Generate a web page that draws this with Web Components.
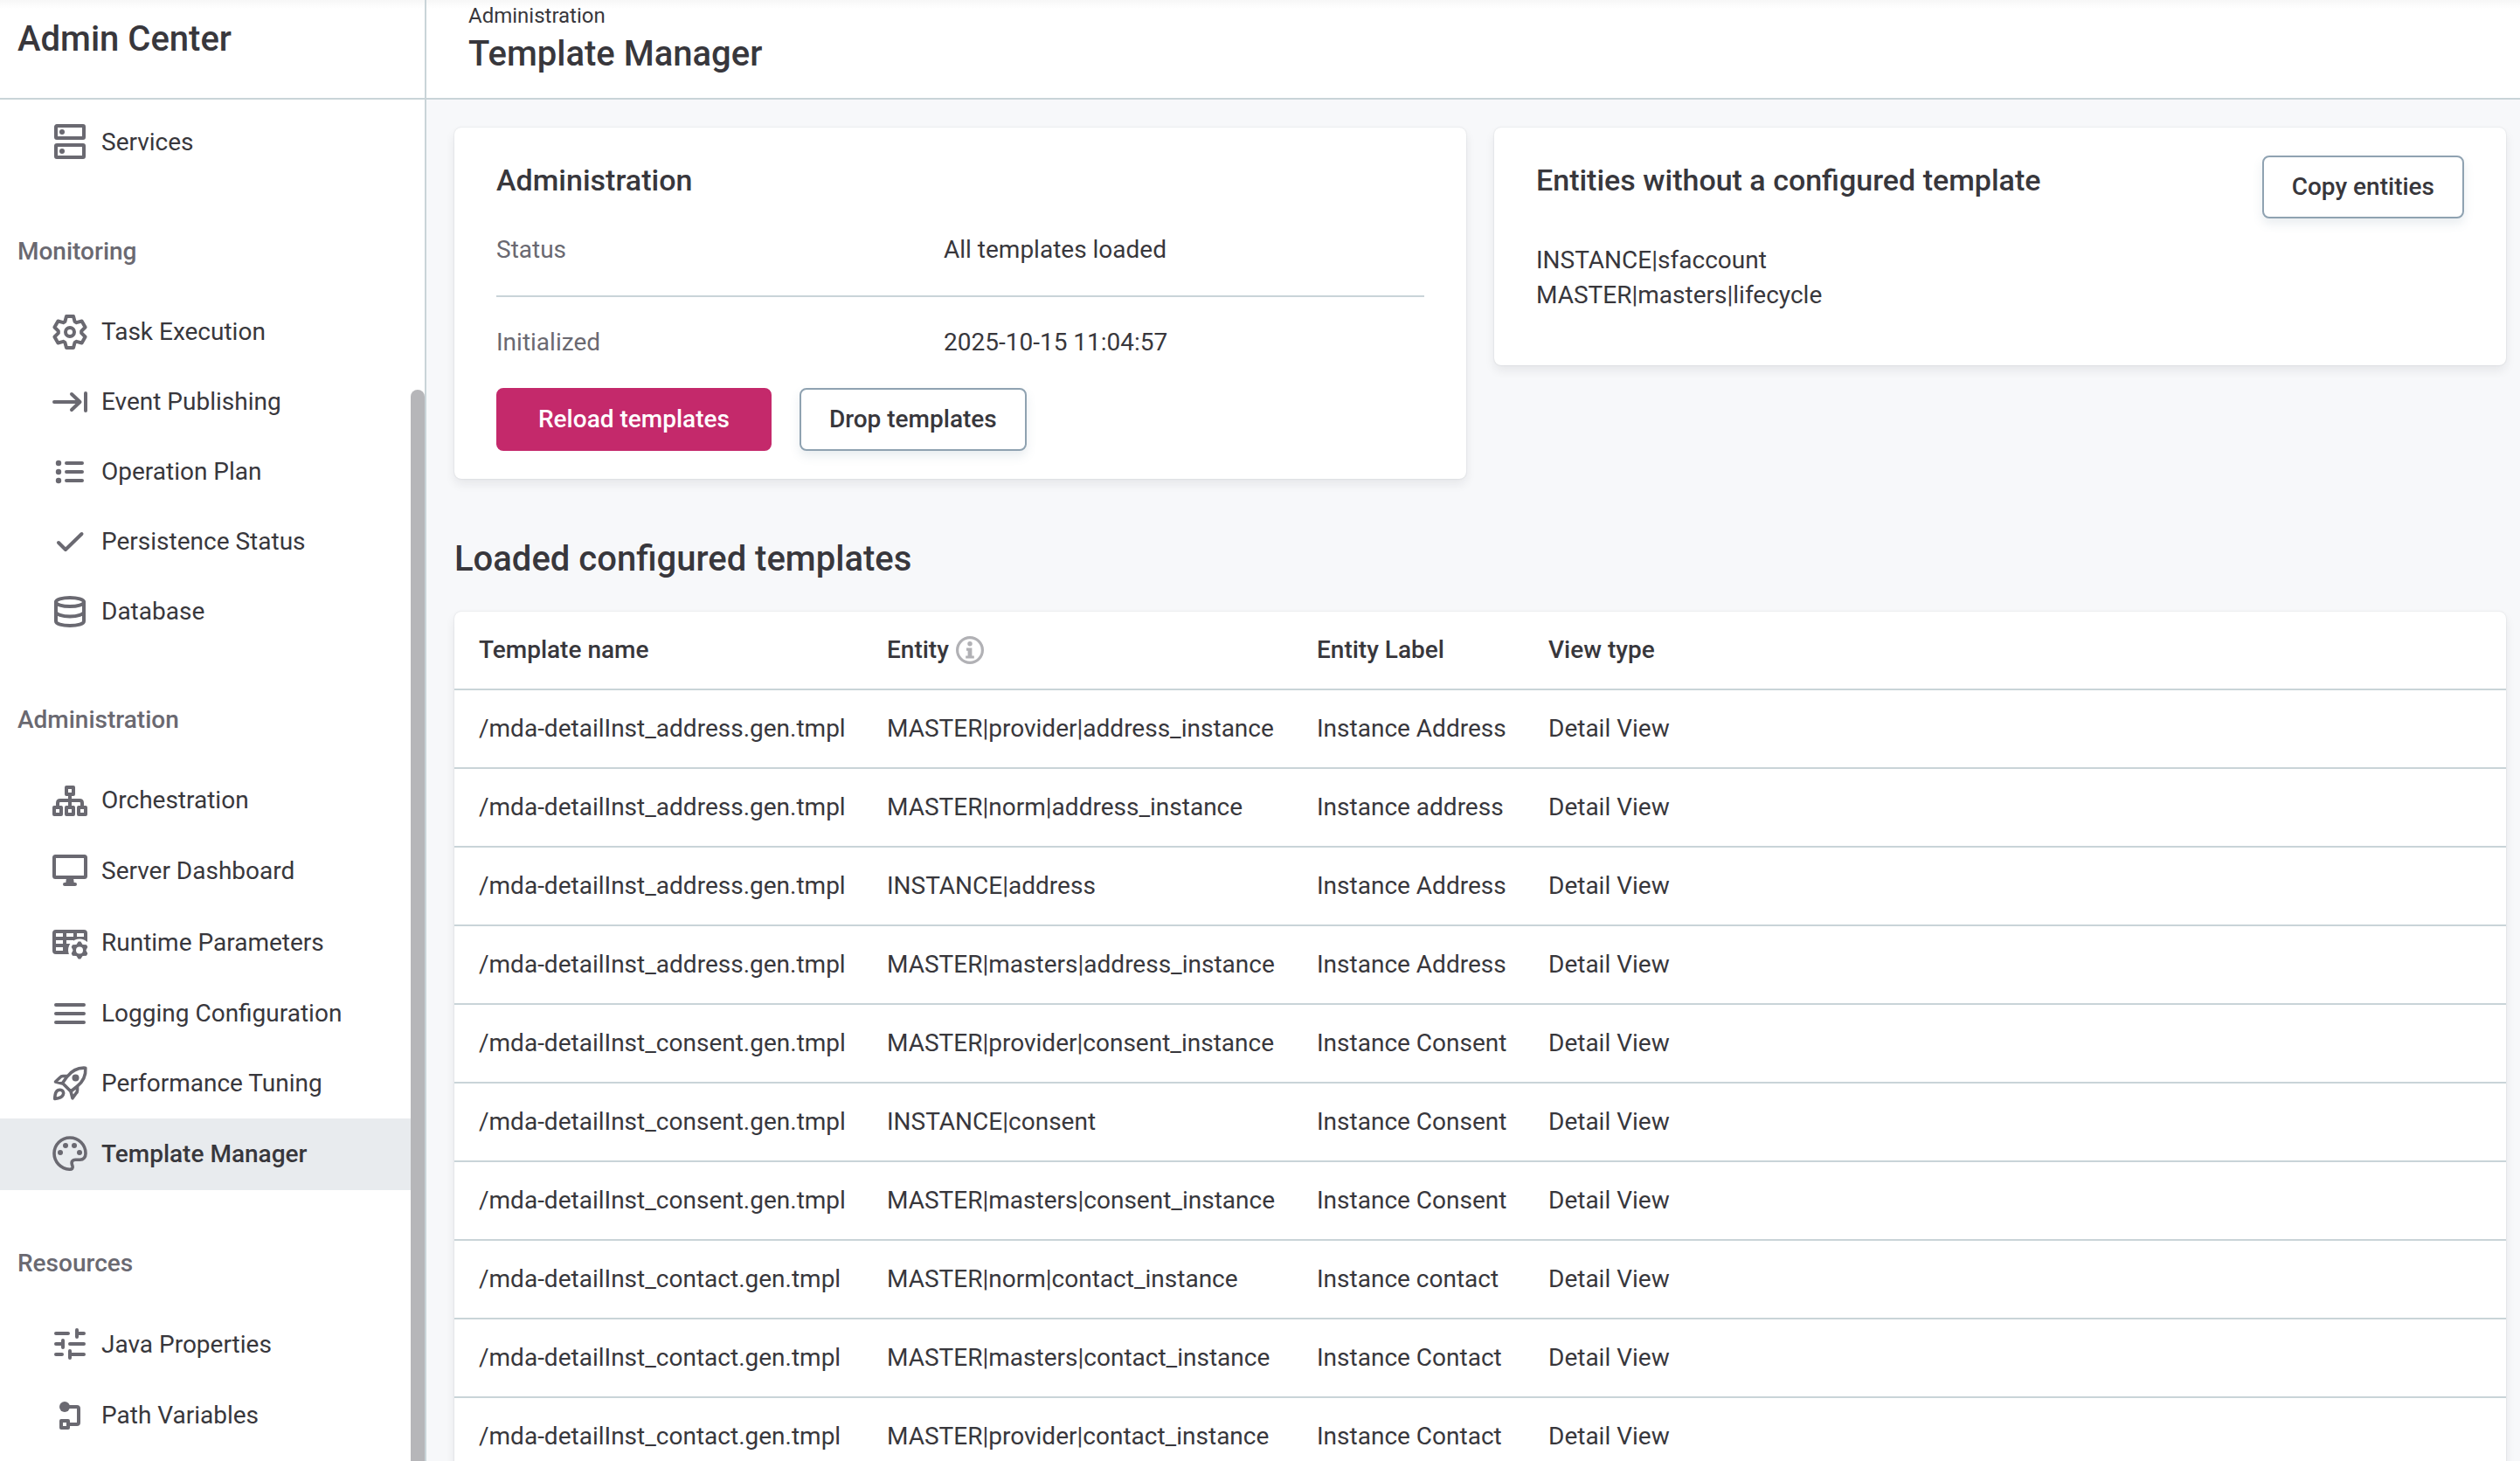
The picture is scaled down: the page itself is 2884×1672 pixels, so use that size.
<!DOCTYPE html>
<html lang="en">
<head>
<meta charset="utf-8">
<title>Template Manager</title>
<style>
  :root {
    --ink: #38373c;
    --muted: #6a6971;
    --line: #c9d4d8;
    --page: #f7f8fa;
    --selected: #e8ebee;
    --accent: #c4296b;
    --outline: #8fa2b1;
    --thumb: #b6b6b9;
  }
  html, body { height: 100%; }
  body {
    margin: 0;
    overflow: hidden;
    font: 400 28px/40px Roboto, "Liberation Sans", sans-serif;
    color: var(--ink);
    background: #fff;
  }
</style>
</head>
<body>
<admin-app></admin-app>

<template id="tpl-app">
  <style>
    :host { display: grid; grid-template-columns: 488px minmax(0, 1fr); height: 100vh; overflow: hidden; }
  </style>
  <admin-sidebar></admin-sidebar>
  <admin-page section="Administration" heading="Template Manager">
    <template-manager></template-manager>
  </admin-page>
</template>

<template id="tpl-sidebar">
  <style>
    :host { display: flex; flex-direction: column; min-height: 0; box-sizing: border-box; border-right: 2px solid var(--line); background: #fff; }
    header { box-sizing: border-box; height: 114px; flex: none; padding: 21px 20px 0; border-bottom: 2px solid var(--line); background: linear-gradient(#f7f7f7, #fff 10px); }
    h1 { margin: 0; font-size: 40px; line-height: 48px; font-weight: 500; }
    .scroll { flex: 1; min-height: 0; display: flex; overflow: hidden; }
    nav { flex: 1; min-width: 0; padding-top: 8px; }
    .bar { width: 16px; flex: none; display: flex; }
    .thumb { flex: 1; margin-top: 332px; border-radius: 8px 8px 0 0; background: var(--thumb); }
  </style>
  <header><h1>Admin Center</h1></header>
  <div class="scroll">
    <nav aria-label="Admin Center">
      <nav-item icon="services" tall>Services</nav-item>
      <nav-group label="Monitoring">
        <nav-item icon="gear">Task Execution</nav-item>
        <nav-item icon="event">Event Publishing</nav-item>
        <nav-item icon="list">Operation Plan</nav-item>
        <nav-item icon="check">Persistence Status</nav-item>
        <nav-item icon="database">Database</nav-item>
      </nav-group>
      <nav-group label="Administration">
        <nav-item icon="tree">Orchestration</nav-item>
        <nav-item icon="monitor" tall>Server Dashboard</nav-item>
        <nav-item icon="params" tall>Runtime Parameters</nav-item>
        <nav-item icon="lines">Logging Configuration</nav-item>
        <nav-item icon="rocket">Performance Tuning</nav-item>
        <nav-item icon="palette" tall selected>Template Manager</nav-item>
      </nav-group>
      <nav-group label="Resources">
        <nav-item icon="sliders" tall>Java Properties</nav-item>
        <nav-item icon="path">Path Variables</nav-item>
      </nav-group>
    </nav>
    <div class="bar"><div class="thumb"></div></div>
  </div>
</template>

<template id="tpl-group">
  <style>
    :host { display: block; }
    h2 { margin: 0; padding: 64px 20px 32px; font-size: 28px; line-height: 40px; font-weight: 500; color: var(--muted); }
  </style>
  <h2></h2>
  <slot></slot>
</template>

<template id="tpl-item">
  <style>
    :host { display: block; }
    a { display: flex; align-items: center; gap: 16px; height: 80px; padding-left: 60px; color: inherit; text-decoration: none; white-space: nowrap; }
    :host([tall]) a { height: 82px; }
    :host([selected]) a { background: var(--selected); font-weight: 500; }
    app-icon { color: var(--muted); }
  </style>
  <a href="#"><app-icon></app-icon><span><slot></slot></span></a>
</template>

<template id="tpl-page">
  <style>
    :host { display: flex; flex-direction: column; min-width: 0; min-height: 0; background: var(--page); }
    header { box-sizing: border-box; height: 114px; flex: none; padding: 2px 48px 0; border-bottom: 2px solid var(--line); background: linear-gradient(#f7f7f7, #fff 10px); }
    p { margin: 0; font-size: 24px; line-height: 32px; }
    h1 { margin: 0; font-size: 40px; line-height: 56px; font-weight: 500; }
    main { flex: 1; min-height: 0; padding: 32px 16px 0 32px; overflow: hidden; }
  </style>
  <header><p></p><h1></h1></header>
  <main><slot></slot></main>
</template>

<template id="tpl-card">
  <style>
    :host { display: block; padding: 32px 48px; border-radius: 8px; background: #fff; box-shadow: 0 0 2px rgba(20, 30, 40, .14), 0 6px 12px rgba(20, 30, 40, .08); }
    header { display: flex; justify-content: space-between; align-items: flex-start; }
    h2 { margin: 8px 0; font-size: 34px; line-height: 40px; font-weight: 500; }
  </style>
  <header><h2></h2><slot name="action"></slot></header>
  <slot></slot>
</template>

<template id="tpl-button">
  <style>
    :host { display: block; }
    button { display: block; box-sizing: border-box; height: 72px; margin: 0; padding: 0 32px; border: 2px solid var(--outline); border-radius: 8px; background: #fff; color: inherit; font: 500 28px/40px Roboto, "Liberation Sans", sans-serif; white-space: nowrap; box-shadow: 0 6px 12px rgba(100, 130, 150, .14); }
    :host([primary]) button { padding: 0 46px; border-color: var(--accent); background: var(--accent); color: #fff; box-shadow: none; }
  </style>
  <button type="button"><slot></slot></button>
</template>

<template id="tpl-manager">
  <style>
    :host { display: block; }
    .cards { display: grid; grid-template-columns: 1fr 1fr; gap: 32px; align-items: start; }
    dl { margin: 0; }
    dl div { display: grid; grid-template-columns: 512px 1fr; padding: 32px 0; }
    dl div + div { border-top: 2px solid var(--line); }
    dt { color: var(--muted); }
    dd { margin: 0; }
    .buttons { display: flex; gap: 32px; }
    ul { list-style: none; margin: 0; padding: 28px 0; }
    h2 { margin: 68px 0 36px; font-size: 40px; line-height: 48px; font-weight: 500; }
  </style>
  <div class="cards">
    <app-card heading="Administration">
      <dl>
        <div><dt>Status</dt><dd>All templates loaded</dd></div>
        <div><dt>Initialized</dt><dd>2025-10-15 11:04:57</dd></div>
      </dl>
      <div class="buttons">
        <app-button primary>Reload templates</app-button>
        <app-button>Drop templates</app-button>
      </div>
    </app-card>
    <app-card heading="Entities without a configured template">
      <app-button slot="action">Copy entities</app-button>
      <ul>
        <li>INSTANCE|sfaccount</li>
        <li>MASTER|masters|lifecycle</li>
      </ul>
    </app-card>
  </div>
  <h2>Loaded configured templates</h2>
  <template-table></template-table>
</template>

<template id="tpl-table">
  <style>
    :host { display: block; border-radius: 8px; background: #fff; box-shadow: 0 0 2px rgba(20, 30, 40, .14), 0 6px 12px rgba(20, 30, 40, .08); }
    table { width: 100%; table-layout: fixed; border-collapse: separate; border-spacing: 0; }
    th, td { height: 88px; padding: 0 0 0 28px; text-align: left; vertical-align: middle; white-space: nowrap; border-bottom: 2px solid var(--line); }
    th { font-weight: 500; }
    .name { width: 439px; }
    .entity { width: 464px; }
    .label { width: 237px; }
    .with-icon { display: flex; align-items: center; gap: 8px; }
    app-icon { color: #b1b1b5; }
  </style>
  <table>
    <thead>
      <tr>
        <th class="name">Template name</th>
        <th class="entity"><span class="with-icon">Entity<app-icon name="info" size="32"></app-icon></span></th>
        <th class="label">Entity Label</th>
        <th>View type</th>
      </tr>
    </thead>
    <tbody></tbody>
  </table>
</template>

<script>
  const gearPath = (cx, cy, tooth, count) => {
    const points = [];
    for (let i = 0; i < count; i++) {
      const a = i * 2 * Math.PI / count, c = Math.cos(a), s = Math.sin(a);
      for (const [x, y] of tooth) points.push((cx + x * c - y * s).toFixed(2) + ' ' + (cy + x * s + y * c).toFixed(2));
    }
    return 'M' + points.join('L') + 'Z';
  };

  const ICONS = {
    services: '<rect x="4" y="1" width="32" height="14" rx="1"/><rect x="4" y="23" width="32" height="14" rx="1"/><g class="f"><circle cx="11" cy="8" r="3"/><circle cx="11" cy="30" r="3"/></g>',
    gear: `<path d="${gearPath(20, 20, [[-5.6, -12], [-4, -18], [4, -18], [5.6, -12]], 6)}"/><circle cx="20" cy="20" r="5"/>`,
    event: '<path d="M2 20H31M22 11l9.500 9-9.500 9M38 10v20"/>',
    list: '<path d="M16 10H34M16 20H34M16 30H34"/><g class="f"><circle cx="7" cy="10" r="3.200"/><circle cx="7" cy="20" r="3.200"/><circle cx="7" cy="30" r="3.200"/></g>',
    check: '<path d="M7 21l8 8L33.500 11"/>',
    database: '<ellipse cx="20" cy="9" rx="16" ry="5"/><path d="M4 9v22c0 3 7 5 16 5s16-2 16-5V9M4 20c0 3 7 5.500 16 5.500s16-2.500 16-5.500"/>',
    tree: '<rect x="16" y="5" width="8" height="8"/><rect x="2" y="28" width="8" height="8"/><rect x="16" y="28" width="8" height="8"/><rect x="30" y="28" width="8" height="8"/><path d="M20 13v15M6 28v-5q0-3 3-3h22q3 0 3 3v5"/>',
    monitor: '<rect x="2" y="3" width="36" height="24" rx="1.500"/><path d="M14 35H26"/><path class="f" d="M16 28h8l1 7H15z"/>',
    params: `<mask id="m"><rect width="40" height="40" fill="#fff" stroke="none"/><circle cx="31" cy="28.500" r="13" fill="#000" stroke="none"/></mask><path class="f" mask="url(#m)" fill-rule="evenodd" d="M4 5H36a4 4 0 0 1 4 4V33H4a4 4 0 0 1-4-4V9a4 4 0 0 1 4-4zM4 9v4h8V9zM16 9v4h8V9zM28 9v4h8V9zM4 17v4h8v-4zM16 17v4h8v-4zM28 17v4h8v-4zM4 25v4h8v-4z"/><path class="f" fill-rule="evenodd" d="${gearPath(31, 28.5, [[-3.6, -6.6], [-1.3, -10], [1.3, -10], [3.6, -6.6]], 6)}M35 28.500a4 4 0 1 0-8 0a4 4 0 1 0 8 0z"/>`,
    lines: '<path d="M4 10H36M4 20H36M4 30H36"/>',
    rocket: '<path stroke-width="3.600" d="M37.800 2.200C28.500 1.500 21.500 6 16.500 12.500L11.500 19.500L21 29L28 23.500C34.500 18.500 38.500 11.500 37.800 2.200ZM16.500 11.500H12q-2 0-3.200 1.500L3.500 18L11.500 20M28.500 23.500V28q0 2-1.500 3.200L23 36.800L21 29M2.800 37.500C2.800 32 4 27.300 8.500 27.300C12 27.300 13.500 30.500 12.200 33C10.800 36 7.500 37 2.800 37.500Z"/><circle class="f" cx="26.500" cy="13.500" r="4"/>',
    palette: '<path stroke-width="3.600" d="M38 19C38 9 30 1 20 1S2 9 2 19C2 28.500 9.500 36.500 19.500 37.200C22.500 37.400 23.800 35.600 23 33.500C21 29 22.500 26.200 26.500 26.200H31.500C35.500 26.200 38 23.500 38 19Z"/><g class="f"><circle cx="15" cy="10" r="3"/><circle cx="25" cy="10" r="3"/><circle cx="9" cy="18" r="3"/><circle cx="31" cy="18" r="3"/></g>',
    sliders: '<path d="M4 7H18M28 3v8M28 7H36M4 19H12M12 15v8M20 19H36M4 31H11M20 27v8M20 31H36"/>',
    path: '<circle class="f" cx="14" cy="10" r="6"/><path d="M14 10H28q2 0 2 2V28q0 2-2 2H18"/><rect x="10" y="26" width="8" height="8"/>',
    info: '<circle cx="20" cy="20" r="18"/><g class="f"><circle cx="20" cy="11" r="3.400"/><path d="M15 17h8v11h3v4H14v-4h3v-7h-2z"/></g>'
  };

  const ROWS = [
    ['address', 'MASTER|provider|address_instance', 'Instance Address'],
    ['address', 'MASTER|norm|address_instance', 'Instance address'],
    ['address', 'INSTANCE|address', 'Instance Address'],
    ['address', 'MASTER|masters|address_instance', 'Instance Address'],
    ['consent', 'MASTER|provider|consent_instance', 'Instance Consent'],
    ['consent', 'INSTANCE|consent', 'Instance Consent'],
    ['consent', 'MASTER|masters|consent_instance', 'Instance Consent'],
    ['contact', 'MASTER|norm|contact_instance', 'Instance contact'],
    ['contact', 'MASTER|masters|contact_instance', 'Instance Contact'],
    ['contact', 'MASTER|provider|contact_instance', 'Instance Contact']
  ];

  class TemplateElement extends HTMLElement {
    constructor() {
      super();
      this.attachShadow({ mode: 'open' }).append(document.getElementById(this.constructor.template).content.cloneNode(true));
    }
    find(selector) { return this.shadowRoot.querySelector(selector); }
  }

  class AppIcon extends HTMLElement {
    static observedAttributes = ['name'];
    constructor() { super(); this.attachShadow({ mode: 'open' }); }
    attributeChangedCallback() { this.draw(); }
    connectedCallback() { this.draw(); }
    draw() {
      const size = this.getAttribute('size') || 40;
      this.shadowRoot.innerHTML = `<style>
        :host { display: block; flex: none; width: ${size}px; height: ${size}px; }
        svg { display: block; overflow: visible; fill: none; stroke: currentColor; stroke-width: 4; stroke-linecap: round; stroke-linejoin: round; }
        .f { fill: currentColor; stroke: none; }
      </style><svg width="${size}" height="${size}" viewBox="0 0 40 40" aria-hidden="true">${ICONS[this.getAttribute('name')] || ''}</svg>`;
    }
  }

  class NavItem extends TemplateElement {
    static template = 'tpl-item';
    connectedCallback() {
      this.find('app-icon').setAttribute('name', this.getAttribute('icon'));
      if (this.hasAttribute('selected')) this.find('a').setAttribute('aria-current', 'page');
    }
  }
  class NavGroup extends TemplateElement {
    static template = 'tpl-group';
    connectedCallback() { this.find('h2').textContent = this.getAttribute('label'); }
  }
  class AdminSidebar extends TemplateElement { static template = 'tpl-sidebar'; }
  class AdminPage extends TemplateElement {
    static template = 'tpl-page';
    connectedCallback() {
      this.find('p').textContent = this.getAttribute('section');
      this.find('h1').textContent = this.getAttribute('heading');
    }
  }
  class AppCard extends TemplateElement {
    static template = 'tpl-card';
    connectedCallback() { this.find('h2').textContent = this.getAttribute('heading'); }
  }
  class AppButton extends TemplateElement { static template = 'tpl-button'; }
  class TemplateTable extends TemplateElement {
    static template = 'tpl-table';
    connectedCallback() {
      this.find('tbody').replaceChildren(...ROWS.map(([kind, entity, label]) => {
        const tr = document.createElement('tr');
        for (const text of [`/mda-detailInst_${kind}.gen.tmpl`, entity, label, 'Detail View']) {
          const td = document.createElement('td');
          td.textContent = text;
          tr.append(td);
        }
        return tr;
      }));
    }
  }
  class TemplateManager extends TemplateElement { static template = 'tpl-manager'; }
  class AdminApp extends TemplateElement { static template = 'tpl-app'; }

  customElements.define('app-icon', AppIcon);
  customElements.define('nav-item', NavItem);
  customElements.define('nav-group', NavGroup);
  customElements.define('admin-sidebar', AdminSidebar);
  customElements.define('app-card', AppCard);
  customElements.define('app-button', AppButton);
  customElements.define('template-table', TemplateTable);
  customElements.define('template-manager', TemplateManager);
  customElements.define('admin-page', AdminPage);
  customElements.define('admin-app', AdminApp);
</script>
</body>
</html>
